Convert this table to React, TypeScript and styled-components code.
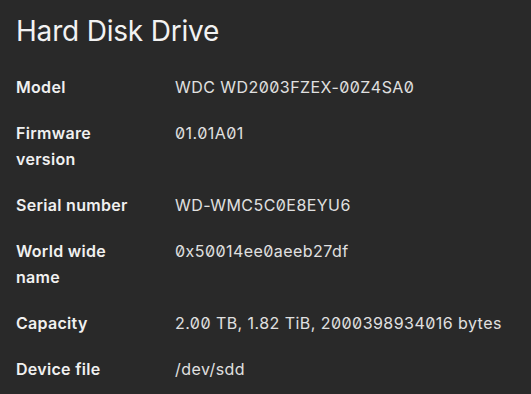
import { Fragment } from "react";
import styled, { createGlobalStyle } from "styled-components";

const GlobalStyle = createGlobalStyle`
  html, body {
    margin: 0;
    padding: 0;
    background: #292929;
  }
`;

const Page = styled.main`
  width: 531px;
  height: 394px;
  overflow: hidden;
  box-sizing: border-box;
  padding: 12px 16px 0;
  background: #292929;
  color: #e6e6e6;
  font-family: Inter, "Noto Sans", sans-serif;
  font-feature-settings: "zero" 1;
`;

const Title = styled.h1`
  margin: 0 0 24px;
  font-size: 28px;
  font-weight: 400;
  line-height: 38px;
  color: #f2f2f2;
  letter-spacing: -0.2px;
`;

const List = styled.dl`
  margin: 0;
  display: grid;
  grid-template-columns: 125px 1fr;
  column-gap: 34px;
  row-gap: 20px;
  font-size: 16px;
  line-height: 26px;
`;

const Term = styled.dt`
  margin: 0;
  font-weight: 600;
  color: #f0f0f0;
  letter-spacing: 0.3px;
`;

const Value = styled.dd`
  margin: 0;
  font-weight: 400;
  color: #e0e0e0;
  white-space: nowrap;
  letter-spacing: 0.45px;
`;

const rows: [string, string][] = [
  ["Model", "WDC WD2003FZEX-00Z4SA0"],
  ["Firmware version", "01.01A01"],
  ["Serial number", "WD-WMC5C0E8EYU6"],
  ["World wide name", "0x50014ee0aeeb27df"],
  ["Capacity", "2.00 TB, 1.82 TiB, 2000398934016 bytes"],
  ["Device file", "/dev/sdd"],
];

export default function App() {
  return (
    <>
      <GlobalStyle />
      <Page>
        <Title>Hard Disk Drive</Title>
        <List>
          {rows.map(([k, v]) => (
            <Fragment key={k}>
              <Term>{k}</Term>
              <Value>{v}</Value>
            </Fragment>
          ))}
        </List>
      </Page>
    </>
  );
}
